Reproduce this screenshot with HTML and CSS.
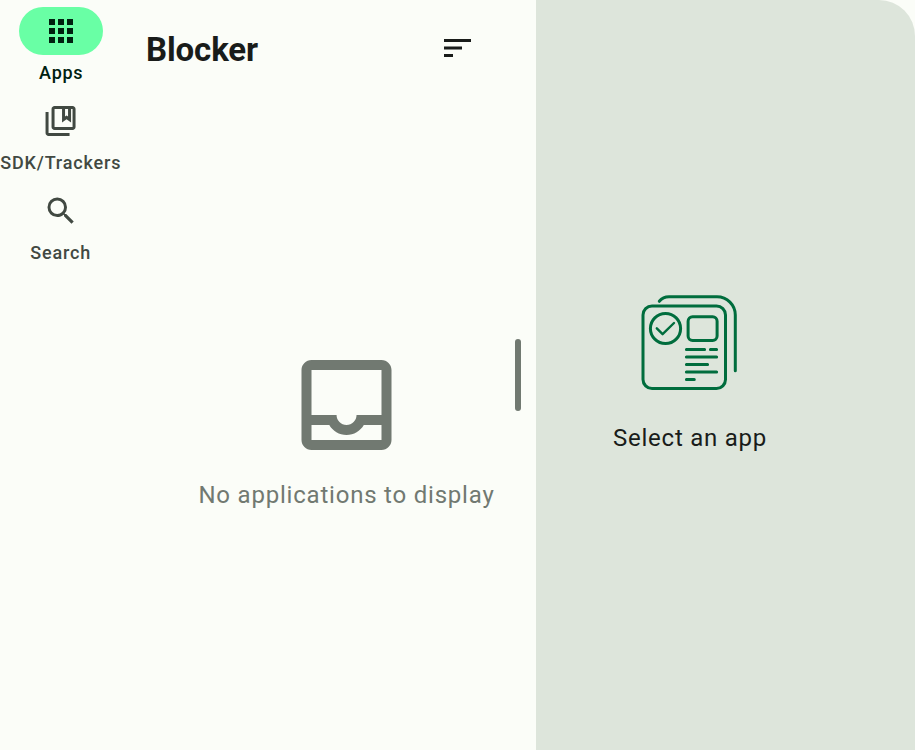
FILE: index.html
```html
<!DOCTYPE html>
<html lang="en">
<head>
<meta charset="utf-8">
<title>Blocker</title>
<link rel="stylesheet" href="styles.css">
</head>
<body>
<div class="app">
  <nav class="rail">
    <a class="rail-item active">
      <span class="indicator"><svg viewBox="0 0 24 24"><path d="M4 8h4V4H4zm6 12h4v-4h-4zm-6 0h4v-4H4zm0-6h4v-4H4zm6 0h4v-4h-4zm6-10v4h4V4zm-6 4h4V4h-4zm6 6h4v-4h-4zm0 6h4v-4h-4z"/></svg></span>
      <span class="label">Apps</span>
    </a>
    <a class="rail-item">
      <span class="indicator"><svg class="bookmarks" viewBox="0 0 24 24"><path d="M4 6H2v14c0 1.1.9 2 2 2h14v-2H4V6zm16-4H8c-1.1 0-2 .9-2 2v12c0 1.1.9 2 2 2h12c1.1 0 2-.9 2-2V4c0-1.1-.9-2-2-2zm0 14H8V4h5v9l3-2.25L19 13V4h1v12zm-5-12h2v5l-1-.75L15 9V4z"/></svg></span>
      <span class="label">SDK/Trackers</span>
    </a>
    <a class="rail-item">
      <span class="indicator"><svg viewBox="0 0 24 24"><path d="M15.5 14h-.79l-.28-.27A6.471 6.471 0 0 0 16 9.5 6.5 6.5 0 1 0 9.5 16c1.61 0 3.09-.59 4.23-1.57l.27.28v.79l5 4.99L20.49 19l-4.99-5zm-6 0C7.01 14 5 11.99 5 9.5S7.01 5 9.5 5 14 7.01 14 9.5 11.99 14 9.5 14z"/></svg></span>
      <span class="label">Search</span>
    </a>
  </nav>
  <main class="list">
    <header class="topbar">
      <h1>Blocker</h1>
      <svg class="sort" viewBox="0 0 24 24"><path d="M3 18h6v-2H3v2zM3 6v2h18V6H3zm0 7h12v-2H3v2z"/></svg>
    </header>
    <section class="empty">
      <svg class="inbox" viewBox="0 0 24 24"><path d="M19 3H5c-1.1 0-2 .9-2 2v14c0 1.1.9 2 2 2h14c1.1 0 2-.9 2-2V5c0-1.1-.9-2-2-2zm0 16H5v-3h3.56c.69 1.19 1.97 2 3.45 2s2.75-.81 3.45-2H19v3zm0-5h-4.99c0 1.1-.9 2-2 2s-2-.9-2-2H5V5h14v9z"/></svg>
      <p>No applications to display</p>
    </section>
  </main>
  <div class="gutter"><span class="handle"></span></div>
  <aside class="detail">
    <svg class="cards" viewBox="0 0 120 115">
      <rect x="13" y="21" width="82.5" height="82.5" rx="9"/>
      <path d="M29.3 16.3Q33 11.8 39 11.8H87A18.3 18.3 0 0 1 105.3 30.1V85.7"/>
      <circle cx="35.5" cy="43.5" r="15.1"/>
      <path class="thin" d="M26.8 43.3L32.6 49.2L44 38"/>
      <rect x="58.1" y="31.8" width="29" height="23.7" rx="4.5"/>
      <path d="M56.4 64.5H74.6M80.4 64.5H86.6M56.4 72H86.6M56.4 79.5H77.6M56.4 87H86.6M56.4 94.5H64.3"/>
    </svg>
    <p>Select an app</p>
  </aside>
</div>
</body>
</html>
```
FILE: styles.css
```css
* { box-sizing: border-box; }
body {
  margin: 0;
  background: #fbfdf8;
  color: #191c1a;
  font-family: Roboto, "Liberation Sans", sans-serif;
}
h1, p { margin: 0; }
svg { display: block; fill: currentColor; overflow: visible; }
.app { display: flex; height: 750px; overflow: hidden; }

.rail {
  width: 121px;
  flex: none;
  padding-top: 7px;
  color: #414942;
}
.rail-item {
  display: flex;
  flex-direction: column;
  align-items: center;
  height: 90px;
}
.indicator {
  display: flex;
  align-items: center;
  justify-content: center;
  width: 84px;
  height: 48px;
  border-radius: 24px;
}
.indicator svg { width: 36px; height: 36px; }
.bookmarks path { transform: translateX(-.3px); }
.label {
  margin-top: 6px;
  font-size: 18px;
  font-weight: 500;
  line-height: 24px;
  letter-spacing: .83px;
  white-space: nowrap;
}
.rail-item .label { padding-left: .5px; }
.active { color: #002110; padding-left: 1px; }
.active .label { letter-spacing: .75px; }
.active .indicator { background: #69ffa5; }

.list {
  width: 379px;
  flex: none;
  display: flex;
  flex-direction: column;
}
.topbar {
  display: flex;
  align-items: center;
  justify-content: space-between;
  height: 96px;
  padding: 0 24px 0 25px;
}
.topbar h1 {
  font-size: 33px;
  line-height: 42px;
  font-weight: 700;
  letter-spacing: -.12px;
  padding-top: 3px;
}
.sort { width: 36px; height: 36px; }
.sort path { transform: translateX(-.33px); }
.empty {
  display: flex;
  flex-direction: column;
  align-items: center;
  padding: 249px 0 0 72px;
  color: #717971;
}
.inbox { width: 120px; height: 120px; }
.inbox path { transform: translateX(-.1px); }
.empty p, .detail p {
  font-size: 24px;
  line-height: 36px;
  letter-spacing: .79px;
  white-space: nowrap;
}
.empty p { margin-top: 12px; }

.gutter {
  width: 36px;
  flex: none;
  display: flex;
  align-items: center;
  justify-content: center;
}
.handle {
  width: 6px;
  height: 72px;
  border-radius: 3px;
  background: #717971;
}

.detail {
  width: 378.5px;
  flex: none;
  display: flex;
  flex-direction: column;
  align-items: center;
  padding: 285px 70.5px 0 0;
  background: #dde5db;
  border-radius: 0 36px 0 0;
}
.cards {
  width: 120px;
  height: 115px;
  fill: none;
  stroke: #006d3d;
  stroke-width: 3;
  stroke-linecap: round;
  stroke-linejoin: round;
}
.cards .thin { stroke-width: 2.4; }
.detail p { margin-top: 20px; letter-spacing: .75px; }
```
